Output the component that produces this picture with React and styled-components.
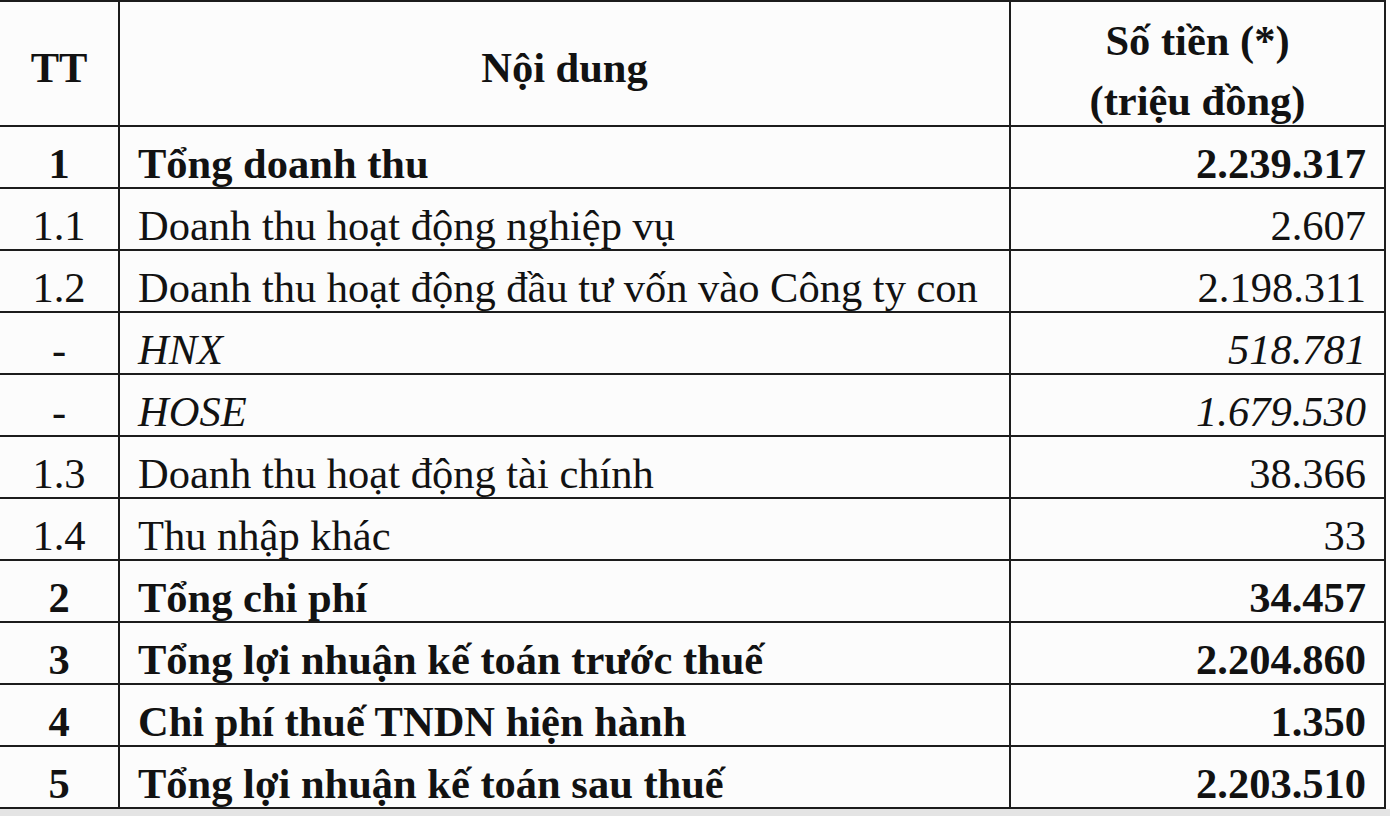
import React from "react";
import styled, { createGlobalStyle } from "styled-components";

const Global = createGlobalStyle`
  html, body { margin: 0; padding: 0; background: #e4e4e4; }
  body { font-family: "Liberation Serif", "Times New Roman", serif; color: #121212; }
`;

const Sheet = styled.div`
  width: 1390px;
  background: #fcfcfc;
`;

const Table = styled.table`
  border-collapse: collapse;
  table-layout: fixed;
  width: 1385px;
  font-size: 42.5px;
  line-height: 1;
`;

const Cell = styled.td`
  border: 2px solid #1c1c1c;
  padding: 15px ${(p) => (p.$align ? "18px" : "0")} 0;
  text-align: ${(p) => p.$align || "center"};
  font-weight: ${(p) => (p.$bold ? 700 : 400)};
  font-style: ${(p) => (p.$italic ? "italic" : "normal")};
  vertical-align: middle;
  white-space: nowrap;
  &:first-child { border-left: none; }
`;

const HeadCell = styled(Cell)`
  font-weight: 700;
  line-height: 60px;
  padding-top: 9px;
`;

const HeadStack = styled.div`
  height: 114px;
`;

const Row = styled.tr`
  height: ${(p) => p.$h}px;
`;

const rows = [
  { tt: "1", name: "Tổng doanh thu", value: "2.239.317", bold: true },
  { tt: "1.1", name: "Doanh thu hoạt động nghiệp vụ", value: "2.607" },
  { tt: "1.2", name: "Doanh thu hoạt động đầu tư vốn vào Công ty con", value: "2.198.311" },
  { tt: "-", name: "HNX", value: "518.781", italic: true },
  { tt: "-", name: "HOSE", value: "1.679.530", italic: true },
  { tt: "1.3", name: "Doanh thu hoạt động tài chính", value: "38.366" },
  { tt: "1.4", name: "Thu nhập khác", value: "33" },
  { tt: "2", name: "Tổng chi phí", value: "34.457", bold: true },
  { tt: "3", name: "Tổng lợi nhuận kế toán trước thuế", value: "2.204.860", bold: true },
  { tt: "4", name: "Chi phí thuế TNDN hiện hành", value: "1.350", bold: true },
  { tt: "5", name: "Tổng lợi nhuận kế toán sau thuế", value: "2.203.510", bold: true },
];

export default function App() {
  return (
    <>
      <Global />
      <Sheet>
        <Table>
          <colgroup>
            <col style={{ width: 119 }} />
            <col style={{ width: 891 }} />
            <col style={{ width: 375 }} />
          </colgroup>
          <thead>
            <Row $h={124}>
              <HeadCell>TT</HeadCell>
              <HeadCell>Nội dung</HeadCell>
              <HeadCell>
                <HeadStack>
                  Số tiền (*)
                  <br />
                  (triệu đồng)
                </HeadStack>
              </HeadCell>
            </Row>
          </thead>
          <tbody>
            {rows.map((r, i) => (
              <Row key={i} $h={62}>
                <Cell $bold={r.bold}>{r.tt}</Cell>
                <Cell $align="left" $bold={r.bold} $italic={r.italic}>
                  {r.name}
                </Cell>
                <Cell $align="right" $bold={r.bold} $italic={r.italic}>
                  {r.value}
                </Cell>
              </Row>
            ))}
          </tbody>
        </Table>
      </Sheet>
    </>
  );
}
